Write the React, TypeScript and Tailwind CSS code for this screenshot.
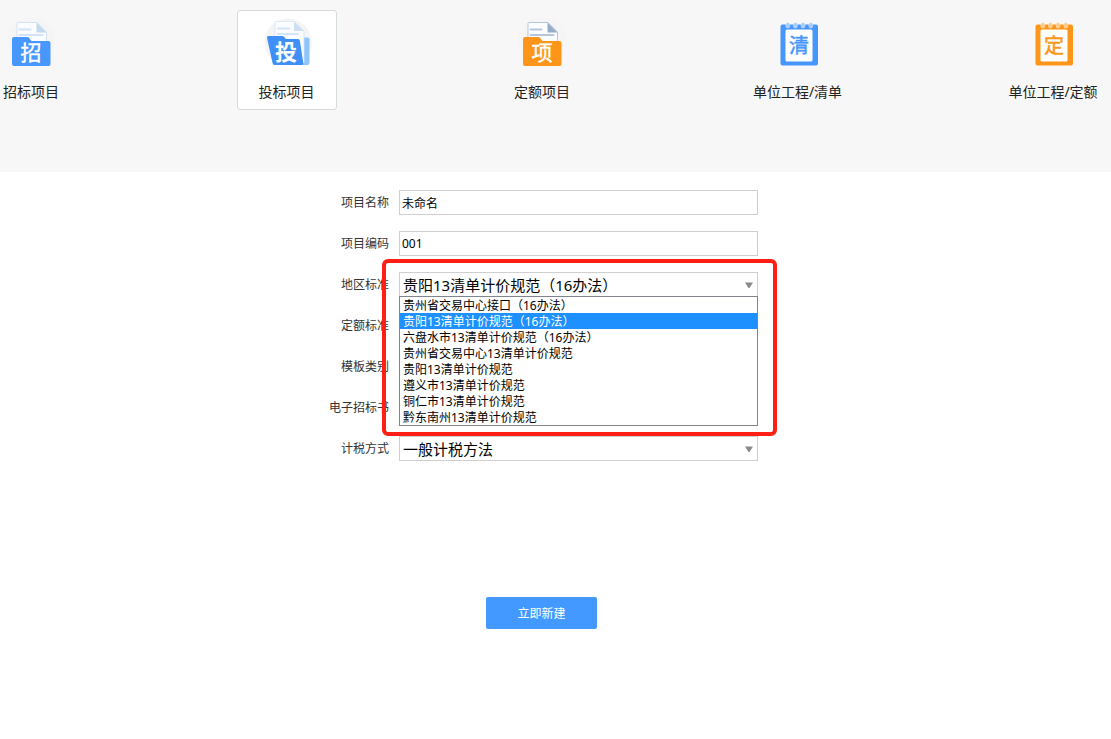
import { useState } from "react";
import clsx from "clsx";

interface ProjectType {
  id: string;
  label: string;
  icon: React.ReactNode;
}

const REGIONS = [
  "贵州省交易中心接口（16办法）",
  "贵阳13清单计价规范（16办法）",
  "六盘水市13清单计价规范（16办法）",
  "贵州省交易中心13清单计价规范",
  "贵阳13清单计价规范",
  "遵义市13清单计价规范",
  "铜仁市13清单计价规范",
  "黔东南州13清单计价规范",
];

function FolderIcon({ glyph, color, line, fold }: { glyph: string; color: string; line: string; fold: string }) {
  return (
    <svg className="h-[50px] w-12 overflow-visible" viewBox="0 0 48 50" aria-hidden="true">
      <circle cx="24" cy="24" r="24" fill="#f5f5f5" />
      <path d="M11 5.5h19l9.5 9.5V30H10V6.5a1 1 0 0 1 1-1z" fill="#fafcff" stroke={line} strokeWidth="1" />
      <path d="M29.5 5.5l10 10h-10z" fill={fold} />
      <path d="M12.5 12.5h11M12.5 18h23" stroke={line} strokeWidth="2" strokeLinecap="round" />
      <path
        d="M7 20h13.5q1.5 0 2.2 1.5l.6 1.2q.8 1.3 2.2 1.3h16a2 2 0 0 1 2 2v21a2 2 0 0 1-2 2H7a2 2 0 0 1-2-2V22a2 2 0 0 1 2-2z"
        fill={color}
      />
      <text x="24" y="43" textAnchor="middle" fontSize="21" fill="#fff" stroke="#fff" strokeWidth="0.4">
        {glyph}
      </text>
    </svg>
  );
}

function OpenFolderIcon({ glyph }: { glyph: string }) {
  return (
    <svg className="h-[50px] w-12 overflow-visible" viewBox="0 0 48 50" aria-hidden="true">
      <circle cx="25" cy="25" r="23.5" fill="#f4f4f4" />
      <path d="M38 20.5h6.5a2 2 0 0 1 2 2V46a2 2 0 0 1-2 2H38z" fill="#8fc5ff" />
      <path d="M13 4.5h18l10 9.5v32H12V5.5a1 1 0 0 1 1-1z" fill="#fafcff" stroke="#d5e4f6" strokeWidth="0.8" />
      <path d="M31 4.5L41 14H31z" fill="#cfdff2" />
      <path d="M15 11.5h11M15 17h20" stroke="#d5e4f6" strokeWidth="2" strokeLinecap="round" />
      <path
        d="M5.5 19H19q1.5 0 2.2 1l1 1.2q.6.8 1.8.8h11q1.6 0 1.8 1.6L40.3 46.3q.2 1.7-1.5 1.7H11.5q-1.7 0-1.9-1.7L4 20.7Q3.8 19 5.5 19z"
        fill="#3f8ff7"
      />
      <text x="23" y="43" textAnchor="middle" fontSize="22" fontWeight="700" fill="#fff">
        {glyph}
      </text>
    </svg>
  );
}

function NotebookIcon({ glyph, color, ring }: { glyph: string; color: string; ring: string }) {
  return (
    <svg className="h-[50px] w-12 overflow-visible" viewBox="0 0 48 50" aria-hidden="true">
      <rect x="6.5" y="7.5" width="37.5" height="41" rx="2" fill={color} />
      <rect x="11.5" y="12.5" width="27" height="32" rx="1.5" fill="#fff" />
      {[13.8, 21.4, 29, 36.8].map((x) => (
        <rect key={x} x={x - 2} y="5.5" width="4" height="5.5" rx="2" fill={ring} stroke="#f7f7f7" strokeWidth="0.4" />
      ))}
      <text x="25" y="36" textAnchor="middle" fontSize="20" fill={color} stroke={color} strokeWidth="0.5">
        {glyph}
      </text>
    </svg>
  );
}

const PROJECT_TYPES: ProjectType[] = [
  { id: "tender", label: "招标项目", icon: <FolderIcon glyph="招" color="#4797fc" line="#d3e2f4" fold="#c3d8ef" /> },
  { id: "bid", label: "投标项目", icon: <OpenFolderIcon glyph="投" /> },
  { id: "quota", label: "定额项目", icon: <FolderIcon glyph="项" color="#fc9518" line="#b6c5d9" fold="#98acc6" /> },
  { id: "unit-list", label: "单位工程/清单", icon: <NotebookIcon glyph="清" color="#4696fb" ring="#a5ccfb" /> },
  { id: "unit-quota", label: "单位工程/定额", icon: <NotebookIcon glyph="定" color="#fc9518" ring="#fccb8d" /> },
];

const labelClass = "w-16 shrink-0 whitespace-nowrap text-right text-xs text-[#333]";
const fieldClass = "h-[25px] w-full rounded-none border border-[#cfcfcf] bg-white text-black outline-none";

function TextField({ id, label, defaultValue }: { id: string; label: string; defaultValue: string }) {
  return (
    <div className="flex items-center gap-2.5">
      <label htmlFor={id} className={labelClass}>
        {label}
      </label>
      <input id={id} type="text" defaultValue={defaultValue} className={clsx(fieldClass, "px-0.5 text-xs")} />
    </div>
  );
}

interface SelectFieldProps {
  id: string;
  label: string;
  options: string[];
  value?: string;
  onChange?: (value: string) => void;
  children?: React.ReactNode;
}

function SelectField({ id, label, options, value, onChange, children }: SelectFieldProps) {
  return (
    <div className="flex items-center gap-2.5">
      <label htmlFor={id} className={labelClass}>
        {label}
      </label>
      <div className="relative h-[25px] flex-1">
        <select
          id={id}
          value={value ?? options[0]}
          onChange={(e) => onChange?.(e.target.value)}
          className={clsx(fieldClass, "appearance-none pl-[3px] pr-6 pt-0.5 text-[15px] leading-[21px]")}
        >
          {options.map((o) => (
            <option key={o} value={o}>
              {o}
            </option>
          ))}
        </select>
        <svg className="pointer-events-none absolute right-[5px] top-2.5 h-[6px] w-2" viewBox="0 0 8 6" aria-hidden="true">
          <path d="M0 .5h8L4.5 6h-1z" fill="#8a8a8a" />
        </svg>
        {children}
      </div>
    </div>
  );
}

export default function App() {
  const [type, setType] = useState("bid");
  const [region, setRegion] = useState(REGIONS[1]);
  const [taxMethod, setTaxMethod] = useState("一般计税方法");

  return (
    <div className="min-h-screen overflow-hidden bg-white font-['Noto_Sans','Noto_Sans_CJK_SC',sans-serif]">
      <header className="bg-[#f7f7f7] pb-[62px] pt-2.5">
        <nav className="-ml-[19px] mr-2 flex justify-between">
          {PROJECT_TYPES.map((t) => (
            <button
              key={t.id}
              type="button"
              onClick={() => setType(t.id)}
              className={clsx(
                "flex h-[100px] w-[100px] flex-col items-center gap-[15px] whitespace-nowrap rounded-[3px] border pt-1.5 text-sm leading-5 text-[#222]",
                t.id === type ? "border-[#d5dadd] bg-white" : "border-transparent"
              )}
            >
              {t.icon}
              {t.label}
            </button>
          ))}
        </nav>
      </header>

      <form className="-ml-5 mr-2 flex flex-col items-center pt-[18px]" onSubmit={(e) => e.preventDefault()}>
        <div className="flex w-full max-w-[433px] flex-col gap-4">
          <TextField id="name" label="项目名称" defaultValue="未命名" />
          <TextField id="code" label="项目编码" defaultValue="001" />
          <SelectField id="region" label="地区标准" options={REGIONS} value={region} onChange={setRegion}>
            <ul
              role="listbox"
              aria-label="地区标准"
              className="absolute inset-x-0 top-6 z-10 border border-[#7f8490] bg-white text-xs text-black"
            >
              {REGIONS.map((r) => (
                <li
                  key={r}
                  role="option"
                  aria-selected={r === region}
                  onClick={() => setRegion(r)}
                  className={clsx(
                    "h-4 cursor-default whitespace-nowrap pl-[3px] leading-[18px]",
                    r === region && "bg-[#1e90ff] text-white"
                  )}
                >
                  {r}
                </li>
              ))}
            </ul>
            <div className="pointer-events-none absolute -left-[17px] -right-[19px] -top-[13px] z-20 h-[177px] rounded-md border-4 border-[#ff1f14]" />
          </SelectField>
          <SelectField id="quota-standard" label="定额标准" options={[""]} />
          <SelectField id="template" label="模板类别" options={[""]} />
          <TextField id="e-tender" label="电子招标书" defaultValue="" />
          <SelectField
            id="tax"
            label="计税方式"
            options={["一般计税方法", "简易计税方法"]}
            value={taxMethod}
            onChange={setTaxMethod}
          />
        </div>
        <button type="submit" className="mt-[136px] h-8 w-[111px] rounded-xs bg-[#4399ff] pt-0.5 text-xs text-white">
          立即新建
        </button>
      </form>
    </div>
  );
}
